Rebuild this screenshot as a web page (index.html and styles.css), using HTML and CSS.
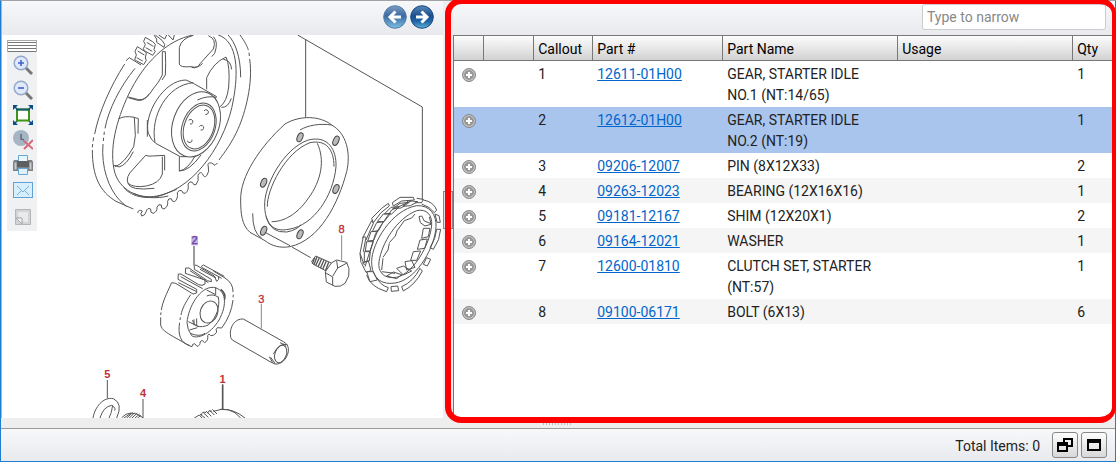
FILE: index.html
```html
<!DOCTYPE html>
<html lang="en">

<head>
  <meta charset="UTF-8">
  <meta name="viewport" content="width=device-width, initial-scale=1.0">
  <title>Parts Catalog</title>
  <link rel="stylesheet" href="styles.css">
</head>

<body>
  <div class="window">
    <div class="workspace">
      <section class="pane">
        <header class="pane-header">
          <button type="button" class="nav-btn" aria-label="Previous">
            <svg width="24" height="24" viewBox="0 0 24 24">
              <defs>
                <linearGradient id="ball" x1="0" y1="0" x2="0" y2="1">
                  <stop offset="0" stop-color="#5b87b8" />
                  <stop offset=".45" stop-color="#17508f" />
                  <stop offset=".7" stop-color="#1f66a6" />
                  <stop offset="1" stop-color="#62b4dc" />
                </linearGradient>
                <linearGradient id="ball-dim" x1="0" y1="0" x2="0" y2="1">
                  <stop offset="0" stop-color="#7d9dc2" />
                  <stop offset=".45" stop-color="#3a6ba3" />
                  <stop offset="1" stop-color="#7cc0e2" />
                </linearGradient>
              </defs>
              <circle cx="12" cy="12" r="11.3" fill="url(#ball-dim)" stroke="#537ba8" />
              <path d="M12.500 6.500L7 12l5.500 5.500M7.500 12H18" fill="none" stroke="#fff" stroke-width="3" />
            </svg>
          </button>
          <button type="button" class="nav-btn" aria-label="Next">
            <svg width="24" height="24" viewBox="0 0 24 24">
              <circle cx="12" cy="12" r="11.3" fill="url(#ball)" stroke="#1c4a80" />
              <path d="M11.500 6.500L17 12l-5.500 5.500M16.500 12H6" fill="none" stroke="#fff" stroke-width="3" />
            </svg>
          </button>
        </header>

        <div class="diagram">
          <svg class="drawing" width="441" height="383" viewBox="6 105 1323 1149">
            <g class="ink">
              <!-- idle gear, large -->
              <path d="M374 192C330 260 296 340 284 402M281 412l-2 12M278 432l-1 10M277 450C277 530 300 575 348 604" />
              <path d="M348 604L400 627M405 205C360 260 325 330 315 385M313 395l-1 10M311 413l-1 10M309 432C303 500 325 565 360 602L380 620" />
              <path d="M378 182l10-9 35 22M412 140l22 14 5 5-3 15 3 7-8 13-22-12-5-3 5-14-4-11 7-14M413 153l20 12M410 173l18 10M436 112l22 13 8 8-4 16 4 5-8 12-25-14-3-6 6-12-5-10 5-12M440 127l20 12M437 143l20 11M466 105l20 16 8 12-2 9-22-15 0-10-8-12M476 105l18 12 6-12M505 105l14 15 4-15" />
              <path d="M580 105C500 120 430 190 385 285C350 360 325 450 345 520C365 580 430 600 480 586C590 560 680 420 700 300C715 220 715 125 655 105" />
              <path d="M372 563C395 592 450 603 500 580L530 568M400 580C430 594 470 597 505 588" />
              <path d="M684 105C705 125 722 170 722 232M720 105C735 125 742 140 745 150M747 158l1 10M749 177C760 250 735 340 715 385C695 430 675 455 657 480" />
              <path d="M652 489l-7 7-10-7q-15-3-10 12 4 14-5 26-8 8-12-5-8-10-14 4 4 16-6 28-8 3-11-7-8-5-13 5 4 18-8 28-8 2-11-8-8-4-13 6 3 18-8 27-9 1-10-9-10-2-11 8 2 16-11 23-10-1-8-12-9-5-13 7 1 14-12 18-9-1-7-13-10-5-13 7-4 14-14 14-6-6 2-15-12-6-14 6" />
              <!-- windows between the spokes -->
              <path d="M538 192V142Q545 115 580 106M538 192q2 11 35 8 20 6 35-10M625 107q26 10 15 40L601 190q-10 18-26 12M640 110q16 15 4 50L635 170" />
              <path d="M487 155v70q-10 22-28 42-20 35-43 32l-31-8M487 155h9q2 38 0 70l-10 15M385 293l28 8q20 3 35-20" />
              <path d="M355 357q18-11 48-5l12 4-1 45M403 352l3 55-5 33q-28 50-55 60l-5-6M400 455q-20 40-43 46l-12-5" />
              <path d="M384 550q-8-20 15-42l38-42q10 4 20 2l37-2v45M487 470v52q-8 28-48 36-38 6-55-8Q390 573 463 565" />
              <path d="M620 268v-35q20-45 58-62 13 28 8 90-5 45-27 60M670 178q22 2 25 30M664 322q20 2 30-27" />
              <path d="M538 470v43q25-4 48-46M538 513q30 0 65-48" />
              <!-- hub -->
              <path d="M558 240C490 240 430 345 445 400Q453 420 467 430L541 470L560 470M465 427C450 350 500 255 580 248M558 240L580 250L650 290M442 410V360" />
              <ellipse cx="588" cy="373" rx="69" ry="101" transform="rotate(20 588 373)" />
              <path d="M592 300q30-14 58-8" />
              <ellipse cx="596" cy="381" rx="49" ry="74" transform="rotate(20 596 381)" />
              <ellipse cx="597" cy="381" rx="44" ry="68" transform="rotate(20 597 381)" />
              <path d="M612 333a7 7 0 1 1 4 10M566 361a7 7 0 1 1 4 11M598 380a7 7 0 1 1 4 10M562 422a7 7 0 1 0 14-3" />

              <!-- leader lines -->
              <path d="M893 105L1267 321V600M917 120V352M795 697L870 737M876 741L932 773" />

              <!-- flange ring -->
              <path d="M722 600C720 530 780 440 855 372C900 345 960 347 995 375C1040 400 1053 460 1040 515C1015 610 960 720 870 740C840 745 815 738 795 722L750 697C725 675 722 640 722 600M900 390C925 375 960 370 995 375M758 640Q758 700 785 714" />
              <path d="M794 620C790 560 850 445 925 420C985 405 1010 450 1008 500C1000 590 940 675 870 687C815 700 796 665 794 620" />
              <path d="M802 620C800 570 855 456 930 428C980 418 1002 450 1002 500M798 650Q812 700 860 696 890 690 902 675" />
              <path d="M952 430C975 480 965 540 925 595C890 645 850 665 815 665" />
              <g class="hole">
                <ellipse cx="900" cy="412" rx="8" ry="14" transform="rotate(24 900 412)" />
                <ellipse cx="1008" cy="422" rx="8" ry="15" transform="rotate(24 1008 422)" />
                <ellipse cx="791" cy="548" rx="8" ry="14" transform="rotate(24 791 548)" />
                <ellipse cx="1008" cy="567" rx="8" ry="14" transform="rotate(24 1008 567)" />
                <ellipse cx="791" cy="692" rx="8" ry="14" transform="rotate(24 791 692)" />
                <ellipse cx="900" cy="703" rx="8" ry="14" transform="rotate(24 900 703)" />
              </g>

              <!-- one-way clutch -->
              <g transform="translate(1065 570)">
                <path d="M50 215C50 160 110 60 185 47C225 45 245 75 243 110C240 170 190 260 130 277C75 290 50 260 50 215M72 215C80 160 125 85 185 62C215 55 232 75 230 105C225 165 175 250 125 262C85 268 68 245 72 215" />
                <path d="M28 225L15 190 25 140 33 142 25 185M18 218L15 190M22 145L50 92 55 100 33 150M50 85L80 55 100 40 103 48 78 68 55 98ZM112 38L135 22 175 22 178 30 140 33 115 48ZM185 25L205 28 200 38 180 38" />
                <path d="M205 30Q235 35 245 60L238 68Q225 50 200 42M240 72l12 5 4 20-10 0zM245 118h12Q255 150 235 178l-10-5Q243 145 245 118M215 203l12 5-10 20-12-5zM140 290Q175 275 195 235l7 8Q180 285 145 303zM108 290l20-2 3 14-22 2zM35 255Q45 290 95 305l5-12Q75 285 65 262" />
                <path d="M20 220l20-8 8 30-15 5zM28 185l18 0-3 28-15 3zM35 155l20 0-9 28-15 0zM48 125l20-2-12 28-18 2zM65 98l20-3-15 28-18 2zM85 72l22-2-20 25-20 0zM108 52l25-2-23 22-22 0zM135 40l28-3-25 17-25 2zM160 32l28 3-22 12-22 2zM35 245l20 0 12 25-22 5zM30 230L62 130 110 60 170 32" />
                <path d="M192 80l8-2 8 15 20 8-5-20M192 80l4 18 14 10 18-5M205 115l20 0-5 25-20 5zM195 150l22-3-8 28-22 3zM175 185l22-2-12 28-18 0zM150 215l20-3 10 20-25 8zM125 235l20-7 25 15-25 12zM95 258l20-12 25 8-15 12zM80 245l40 5" />
                <path d="M180 72l-10 12-22 8-20 28M127 120l-6 18-18 20M103 160l-4 20-15 22M84 205l-4 35" />
              </g>

              <!-- bolt -->
              <path d="M935 784l12-16 47 21M935 784l4 8 40 21" />
              <path class="thread" d="M944 773l-7 18M951 770l-9 24M958 773l-11 24M965 776l-11 25M972 780l-11 25M979 783l-11 25M986 787l-9 24" />
              <path d="M976 815L995 788 1010 780 1040 787Q1051 805 1046 828L1035 850Q1022 862 1005 859L979 846ZM976 818L998 831V856M1010 782L1013 804 998 829M1013 804L1041 789" />
              <path d="M1025 706V780" class="thin" />

              <!-- pin -->
              <path d="M691 1000C691 980 705 955 730 957L850 1025Q868 1034 865 1055C860 1080 842 1094 825 1092L810 1085 697 1020Q690 1015 691 1000Z" />
              <ellipse cx="842" cy="1062" rx="17" ry="27" transform="rotate(20 842 1062)" />
              <path d="M863 1035Q840 1025 820 1062M808 1070L818 1088M812 1072L825 1090M840 1028l18 8" />
              <path d="M784 912V985" class="thin" />

              <!-- idle gear, small -->
              <path d="M515 848C498 885 488 905 484 930M483 937l-1 8M482 952V975C485 990 500 998 520 1010L570 1038" />
              <path d="M572 884C555 910 547 925 543 945M541 952l-1 8M539 968C533 1000 540 1030 570 1037" />
              <path d="M515 848l12 2 52 32 11-3V868L534 838l1-16 8 0 53 32 10 2 9-4v-12L556 820l1-16 10 0 55 38 12 3V838L583 808V797l5-2 55 33 7 16 6-6v-9M603 800l7-5 63 34M535 848L588 874M542 830L608 866M570 812L625 848M600 808L648 834M605 802l60 33" />
              <path d="M640 813L675 834Q700 850 699 876M700 884l-1 8M699 900Q694 945 665 984L652 983q-6 4-2 14-9 12-18 10l-5-5-4 5q3 14-9 21l-8-7-6 5q2 10-9 13l-7-8q-8 0-8 9l-6-2" />
              <path d="M561 968C565 920 600 860 640 862C680 868 682 915 657 960C630 1005 590 1018 575 1007Q562 990 561 968Z" />
              <ellipse cx="627" cy="936" rx="26" ry="34" transform="rotate(20 627 936)" />
              <path d="M655 890C660 920 652 950 625 975C600 985 580 980 578 960M565 965L597 980M568 990L592 983M582 958v18M590 955v20M620 870l27 14V862M620 888q20-8 35 4M570 1000q30 12 45 0" />
              <path d="M662 868Q678 880 674 898" class="heavy" />
              <path d="M582 738V797" class="heavy thin" />

              <!-- parts cut off at the lower edge -->
              <path d="M279 1254C285 1220 310 1190 340 1196Q370 1210 350 1254M300 1254Q310 1220 335 1216 350 1225 343 1232M338 1216Q335 1240 327 1254M322 1140V1195" />
              <path d="M365 1253Q390 1225 429 1253M372 1254l20-14M380 1254l18-16M388 1254l16-16M396 1254l16-15M405 1254l14-12M413 1254l10-8M429 1197V1254" />
              <path d="M583 1254l15-9 8 9M600 1242l15 12M610 1238l15 14M618 1233l16 16M628 1230l15 15M637 1228l14 14M604 1246q2-14 14-8M622 1240q4-12 14-6M640 1234Q690 1215 722 1254M660 1228Q700 1225 735 1254" />
              <path d="M668 1153V1227" class="heavy" />
            </g>
            <rect x="574" y="708" width="20" height="28" fill="#b9b4ee" />
            <g class="callouts">
              <text x="1025" y="698">8</text>
              <text x="784" y="908">3</text>
              <text x="584" y="733" class="picked">2</text>
              <text x="322" y="1134" class="bold">5</text>
              <text x="429" y="1191" class="bold">4</text>
              <text x="668" y="1149" class="bold">1</text>
            </g>
          </svg>

          <div class="toolbar">
            <div class="grip"></div>
            <button type="button" aria-label="Zoom in">
              <svg width="20" height="20" viewBox="0 0 20 20">
                <path d="M12.500 12.500L19 19" stroke="#777" stroke-width="3" />
                <circle cx="8" cy="8" r="6.800" fill="#dfe9fb" stroke="#96a9c8" stroke-width="1.500" />
                <path d="M8 5v6M5 8h6" stroke="#3f63cf" stroke-width="1.600" />
              </svg>
            </button>
            <button type="button" aria-label="Zoom out">
              <svg width="20" height="20" viewBox="0 0 20 20">
                <path d="M12.500 12.500L19 19" stroke="#777" stroke-width="3" />
                <circle cx="8" cy="8" r="6.800" fill="#dfe9fb" stroke="#96a9c8" stroke-width="1.500" />
                <path d="M5 8h6" stroke="#3f63cf" stroke-width="1.600" />
              </svg>
            </button>
            <button type="button" aria-label="Fit to window">
              <svg width="20" height="20" viewBox="0 0 20 20">
                <path d="M0 5V0h5zM15 0h5v5zM20 15v5h-5zM5 20H0v-5z" fill="#0c4f86" />
                <path d="M1 1l4 4M19 1l-4 4M19 19l-4-4M1 19l4-4" stroke="#0c4f86" stroke-width="1.500" />
                <rect x="4" y="4.500" width="12" height="11" fill="#fff" stroke="#3f9416" stroke-width="2" />
                <path d="M3 4.500h14" stroke="#155a70" stroke-width="2" />
              </svg>
            </button>
            <button type="button" aria-label="Clear history">
              <svg width="20" height="20" viewBox="0 0 20 20">
                <circle cx="8" cy="8" r="8" fill="#a5b5c4" />
                <path d="M8 4v5l3 1" fill="none" stroke="#5c6b79" stroke-width="1.500" />
                <path d="M11 11l9 8M20 10l-9 9" stroke="#d56a7c" stroke-width="2" />
              </svg>
            </button>
            <button type="button" aria-label="Print">
              <svg width="20" height="20" viewBox="0 0 20 20">
                <path d="M1 5h18l1 2v9H0V7z" fill="#7e8083" />
                <path d="M1.500 7.500h2v7h-2zM16.500 7.500h2v7h-2z" fill="#c8c9cb" />
                <path d="M5.500 .5h9v6h-9z" fill="#eaf6ff" stroke="#65a8d8" />
                <path d="M4 6h12v6H4z" fill="#5d6063" />
                <path d="M5.500 13.500h9v6h-9z" fill="#dff1fd" stroke="#65a8d8" />
              </svg>
            </button>
            <button type="button" aria-label="E-mail">
              <svg width="20" height="20" viewBox="0 0 20 20">
                <rect x=".5" y="2.500" width="19" height="15" fill="#d7effc" stroke="#5fa2d3" />
                <path d="M4 6l6 6 6-6M4 15l4-4M16 15l-4-4" fill="none" stroke="#75b2da" />
              </svg>
            </button>
            <button type="button" class="note" aria-label="Notes">
              <svg width="20" height="20" viewBox="0 0 20 20">
                <path d="M2.500 2.500h15v15h-15z" fill="#d3d4d5" stroke="#b5b6b7" />
                <path d="M5 5h10v10h-4L5 9z" fill="#e9eaeb" />
                <path d="M3 11h6v6z" fill="#f4f4f4" stroke="#a5a6a7" />
              </svg>
            </button>
          </div>
        </div>
      </section>

      <div class="splitter"><span class="handle"></span></div>

      <section class="pane">
        <header class="pane-header">
          <input type="text" class="filter" placeholder="Type to narrow" aria-label="Type to narrow">
        </header>
        <div class="grid">
          <table class="parts">
            <colgroup>
              <col class="col-add">
              <col class="col-flag">
              <col class="col-callout">
              <col class="col-number">
              <col class="col-name">
              <col class="col-usage">
              <col>
            </colgroup>
            <thead>
              <tr>
                <th></th>
                <th></th>
                <th>Callout</th>
                <th>Part #</th>
                <th>Part Name</th>
                <th>Usage</th>
                <th>Qty</th>
              </tr>
            </thead>
            <tbody>
              <tr>
                <td><button type="button" class="add" aria-label="Add"></button></td>
                <td></td>
                <td>1</td>
                <td><a href="#">12611-01H00</a></td>
                <td>GEAR, STARTER IDLE NO.1 (NT:14/65)</td>
                <td></td>
                <td>1</td>
              </tr>
              <tr class="selected">
                <td><button type="button" class="add" aria-label="Add"></button></td>
                <td></td>
                <td>2</td>
                <td><a href="#">12612-01H00</a></td>
                <td>GEAR, STARTER IDLE NO.2 (NT:19)</td>
                <td></td>
                <td>1</td>
              </tr>
              <tr>
                <td><button type="button" class="add" aria-label="Add"></button></td>
                <td></td>
                <td>3</td>
                <td><a href="#">09206-12007</a></td>
                <td>PIN (8X12X33)</td>
                <td></td>
                <td>2</td>
              </tr>
              <tr>
                <td><button type="button" class="add" aria-label="Add"></button></td>
                <td></td>
                <td>4</td>
                <td><a href="#">09263-12023</a></td>
                <td>BEARING (12X16X16)</td>
                <td></td>
                <td>1</td>
              </tr>
              <tr>
                <td><button type="button" class="add" aria-label="Add"></button></td>
                <td></td>
                <td>5</td>
                <td><a href="#">09181-12167</a></td>
                <td>SHIM (12X20X1)</td>
                <td></td>
                <td>2</td>
              </tr>
              <tr>
                <td><button type="button" class="add" aria-label="Add"></button></td>
                <td></td>
                <td>6</td>
                <td><a href="#">09164-12021</a></td>
                <td>WASHER</td>
                <td></td>
                <td>1</td>
              </tr>
              <tr>
                <td><button type="button" class="add" aria-label="Add"></button></td>
                <td></td>
                <td>7</td>
                <td><a href="#">12600-01810</a></td>
                <td>CLUTCH SET, STARTER (NT:57)</td>
                <td></td>
                <td>1</td>
              </tr>
              <tr>
                <td><button type="button" class="add" aria-label="Add"></button></td>
                <td></td>
                <td>8</td>
                <td><a href="#">09100-06171</a></td>
                <td>BOLT (6X13)</td>
                <td></td>
                <td>6</td>
              </tr>
            </tbody>
          </table>
        </div>
      </section>
      <div class="highlight"></div>
    </div>

    <div class="splitter-bottom"><span class="dots"></span></div>

    <footer class="status">
      <span class="total">Total Items: 0</span>
      <button type="button" class="win-btn" aria-label="Restore">
        <svg width="16" height="14" viewBox="0 0 16 14">
          <path d="M7 5V1h8v7h-4" fill="none" stroke="#000" stroke-width="2" />
          <path d="M1 5h9v8H1z" fill="none" stroke="#000" stroke-width="2" />
          <path d="M1 6h9v2H1z" />
        </svg>
      </button>
      <button type="button" class="win-btn" aria-label="Maximize">
        <svg width="14" height="12" viewBox="0 0 14 12">
          <path d="M1 1h12v10H1z" fill="none" stroke="#000" stroke-width="2" />
          <path d="M1 1h12v3H1z" />
        </svg>
      </button>
    </footer>
  </div>
</body>

</html>
```

FILE: styles.css
```css
* {
  box-sizing: border-box;
}

body {
  margin: 0;
  font-family: Roboto, Arial, sans-serif;
  font-size: 14px;
  line-height: 21px;
  color: #222;
}

button {
  padding: 0;
  border: none;
  background: none;
}

svg {
  display: block;
}

.window {
  display: flex;
  flex-direction: column;
  min-height: 100vh;
  border: 1px solid #1e7fd0;
  border-top-color: #a3a3a6;
  background: #eee;
}

.workspace {
  position: relative;
  display: grid;
  grid-template-columns: 2fr 10px 3fr;
  flex: 1;
  border-left: 1px solid #9fb8cf;
}

.pane {
  display: flex;
  flex-direction: column;
  min-width: 0;
  background: #fff;
}

.pane-header {
  display: flex;
  justify-content: flex-end;
  align-items: center;
  gap: 3px;
  height: 34px;
  padding: 0 9px 2px;
  background: linear-gradient(#f7f8fa, #e9eaee);
}

.nav-btn {
  width: 24px;
  height: 24px;
}

.filter {
  width: 184px;
  height: 26px;
  padding: 0 4px;
  border: 1px solid #ccc;
  border-radius: 3px;
  font: inherit;
  background: #fff;
}

.filter::placeholder {
  color: #888;
}

/* Exploded view */
.diagram {
  position: relative;
  flex: 1;
  overflow: hidden;
}

.ink {
  fill: none;
  stroke: #555;
  stroke-width: 3;
}

.ink .hole {
  fill: #bbb;
  stroke: #444;
}

.ink .heavy {
  stroke-width: 5;
}

.ink .thin {
  stroke: #888;
}

.ink .thread {
  stroke-width: 4;
}

.callouts {
  font-family: "Liberation Sans", Arial, sans-serif;
  font-size: 33px;
  text-anchor: middle;
  fill: #c03038;
  stroke: #c03038;
  stroke-width: 1;
}

.callouts .bold {
  font-weight: bold;
  stroke: none;
}

.callouts .picked {
  fill: #7a3d9a;
  stroke: #7a3d9a;
}

.toolbar {
  position: absolute;
  top: 5px;
  left: 5px;
  display: flex;
  flex-direction: column;
  width: 30px;
  background: #f0f1f3;
}

.toolbar button {
  display: flex;
  align-items: center;
  justify-content: center;
  height: 25px;
  padding-left: 2px;
}

.toolbar .note {
  height: 29px;
}

.grip {
  height: 12px;
  border: 1px solid #aaa;
  border-bottom: none;
  background: repeating-linear-gradient(#fff 0 1px, #777 1px 2px, #fff 2px 3px);
}

.splitter {
  display: flex;
  align-items: center;
  background: #eee;
}

.handle {
  width: 10px;
  height: 38px;
  border: 1px solid #888;
  background: #ddd;
}

.splitter-bottom {
  display: flex;
  justify-content: center;
  align-items: center;
  height: 10px;
}

.dots {
  width: 30px;
  height: 3px;
  background: repeating-linear-gradient(90deg, #bbb 0 1px, #eee 1px 3px);
}

/* Parts list */
.grid {
  flex: 1;
  border-left: 1px solid #777;
}

.parts {
  width: 100%;
  table-layout: fixed;
  border-collapse: separate;
  border-spacing: 0;
}

.col-add {
  width: 30px;
}

.col-flag {
  width: 50px;
}

.col-callout {
  width: 59px;
}

.col-number {
  width: 130px;
}

.col-name,
.col-usage {
  width: 175px;
}

.parts th {
  height: 26px;
  padding: 3px 4px 0;
  border: solid #777;
  border-width: 1px 1px 1px 0;
  background: linear-gradient(#fdfdfd, #d2d2d2);
  color: #000;
  font-weight: normal;
  text-align: left;
}

.parts th:last-child {
  border-right: none;
}

.parts td {
  height: 25px;
  padding: 3px 20px 1px 4px;
  vertical-align: top;
}

.parts td:first-child,
.parts td:last-child {
  padding-right: 0;
}

.parts tbody tr:nth-child(even) {
  background: #f5f5f5;
}

.parts tbody .selected:nth-child(even) {
  background: #a9c5ee;
}

.parts a {
  color: #06c;
}

.add {
  display: block;
  width: 14px;
  height: 14px;
  margin: 4px 4px 0;
  border: 1px solid #8a8a8a;
  border-radius: 50%;
  background:
    linear-gradient(#fff, #fff) center / 6px 2px no-repeat,
    linear-gradient(#fff, #fff) center / 2px 6px no-repeat,
    #999;
  box-shadow: inset 0 0 0 1px #ccc;
}

/* Red frame drawn over the parts list */
.highlight {
  position: absolute;
  top: -3px;
  right: -1px;
  bottom: -5px;
  left: 443px;
  border: 6px solid #f00;
  border-right-width: 4px;
  border-radius: 16px;
  pointer-events: none;
}

.status {
  display: flex;
  justify-content: flex-end;
  align-items: center;
  gap: 3px;
  height: 33px;
  padding: 0 8px;
  border-top: 1px solid #999;
  background: linear-gradient(#f7f8fa, #e9eaee);
}

.total {
  margin-right: 9px;
  padding-top: 2px;
}

.win-btn {
  display: flex;
  align-items: center;
  justify-content: center;
  width: 26px;
  height: 26px;
  border: 1px solid #888;
  border-radius: 3px;
  background: linear-gradient(#fdfdfd, #d8d8d8);
}
```
